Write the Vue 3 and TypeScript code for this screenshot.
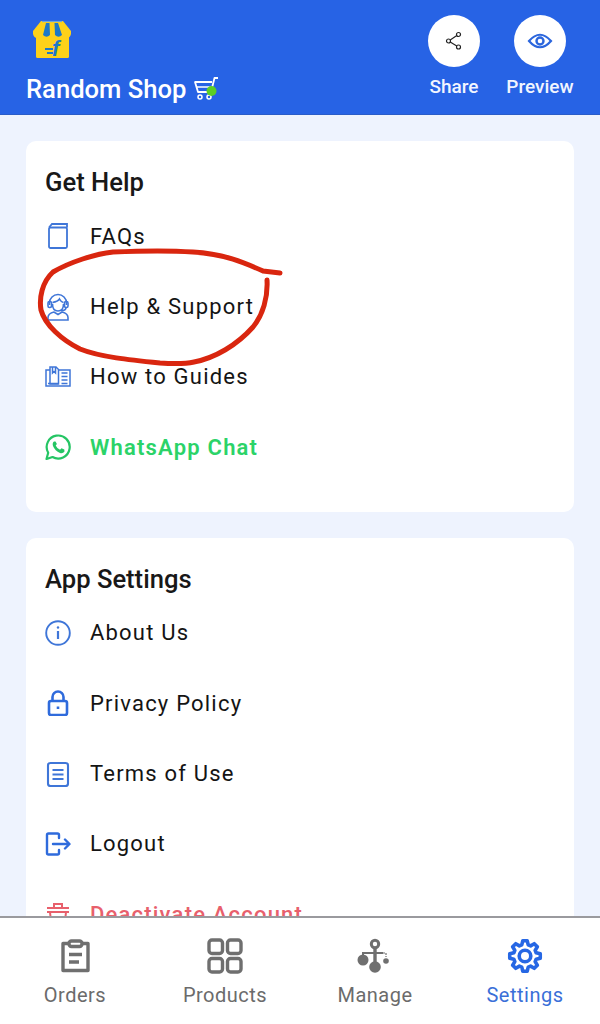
<template>
  <div class="screen">
    <header class="top-bar">
      <div class="shop">
        <svg class="shop-logo" width="40" height="40" viewBox="0 0 40 40">
          <rect x="4" y="13" width="33" height="25" rx="1.500" fill="#fdd11a" />
          <path d="M9 1h22l8 10v3q-1 4-4 4H5q-3 0-4-4v-3z" fill="#fdd11a" />
          <path d="M14 3h3.500L18 15q-3.500 3.500-7 0z" fill="#1c78c8" />
          <path d="M22.500 3H26l4 12q-3.500 3.500-7 0z" fill="#1c78c8" />
          <path d="M10 1.500h20" stroke="#6fa8d8" stroke-width="1.200" />
          <text x="20" y="36" class="logo-f">f</text>
          <path d="M13 29h8M15 33h6" stroke="#1c78c8" stroke-width="1.800" />
        </svg>
        <div class="shop-name">
          <span>Random Shop</span>
          <svg width="26" height="26" viewBox="0 0 26 26">
            <path d="M25 2h-3.500L18 16H5L2 6h17" fill="none" stroke="#fff" stroke-width="1.800" stroke-linejoin="round" />
            <path d="M4 11h14" stroke="#fff" stroke-width="1.500" />
            <circle cx="7" cy="21" r="2" fill="none" stroke="#fff" stroke-width="1.500" />
            <circle cx="16" cy="21" r="2" fill="none" stroke="#fff" stroke-width="1.500" />
            <circle cx="18.500" cy="15" r="5" fill="#5ccf24" />
          </svg>
        </div>
      </div>
      <div class="top-actions">
        <div class="top-action">
          <span class="round-btn">
            <svg width="20" height="20" viewBox="0 0 20 20" fill="none" stroke="#222" stroke-width="1.200">
              <circle cx="14.500" cy="3.500" r="2" />
              <circle cx="4.500" cy="10" r="2" />
              <circle cx="14.500" cy="16" r="2" />
              <path d="M6.200 8.900 12.800 4.600M6.200 11.100l6.600 3.800" />
            </svg>
          </span>
          <span class="top-label">Share</span>
        </div>
        <div class="top-action">
          <span class="round-btn">
            <svg width="26" height="20" viewBox="0 0 26 20" fill="none" stroke="#2b66dd" stroke-width="2.200">
              <path d="M2 10q11-12.500 22 0q-11 12.500-22 0z" />
              <circle cx="13" cy="10" r="3.500" stroke-width="2.400" />
            </svg>
          </span>
          <span class="top-label">Preview</span>
        </div>
      </div>
    </header>

    <main class="content">
      <section class="card help-card">
        <h2>Get Help</h2>
        <div class="row">
          <svg class="row-icon" width="26" height="28" viewBox="0 0 26 28" fill="none" stroke="#3f76d8" stroke-width="1.800">
            <path d="M4 5.500 7 2h15v3.500" />
            <rect x="4" y="5.500" width="18" height="20.500" rx="1.500" />
          </svg>
          <span>FAQs</span>
        </div>
        <div class="row">
          <svg class="row-icon" width="26" height="28" viewBox="0 0 26 28" fill="none" stroke="#3f76d8" stroke-width="1.600">
            <path d="M4.500 12V10a8.500 8.500 0 0 1 17 0v2" />
            <rect x="3" y="8.500" width="3.500" height="6" rx="1.500" />
            <rect x="19.500" y="8.500" width="3.500" height="6" rx="1.500" />
            <path d="M7.500 9.500q5.500-1 7-3.500 1.500 3 4 3.500" />
            <path d="M7.500 11q0 7 5.500 7t5.500-7" />
            <path d="M21 14.500q0 3-5 3.200" />
            <path d="M3 27v-2.500q0-4 6-5.500l4 2.500 4-2.500q6 1.500 6 5.500V27z" />
          </svg>
          <span>Help &amp; Support</span>
        </div>
        <div class="row">
          <svg class="row-icon" width="26" height="24" viewBox="0 0 26 24" fill="none" stroke="#3f76d8" stroke-width="1.500">
            <path d="M5 5H1v16h24V5H14" />
            <path d="M5 2h6l2.500 2.500V19H5z" />
            <path d="M7.500 2v6l1.500-1.500L10.500 8V2" />
            <path d="M16.500 8h6M16.500 11.500h6M16.500 15h6M3 18.500h10M16.500 18.500h6" />
          </svg>
          <span>How to Guides</span>
        </div>
        <div class="row whatsapp">
          <svg class="row-icon" width="26" height="26" viewBox="0 0 26 26" fill="none">
            <path d="M1.500 25l1.700-6.300A11.500 11.500 0 1 1 7.500 23z" stroke="#25c564" stroke-width="2.200" stroke-linejoin="round" />
            <path d="M9 7.500q-2 1.500-1 4.500 2 5 7 7 3 .8 4.500-1.500l-.2-2-2.800-1.300-1.500 1.500q-3-1.200-4.300-4.200l1.200-1.500L10.500 7.500z" fill="#25c564" />
          </svg>
          <span>WhatsApp Chat</span>
        </div>
      </section>

      <section class="card">
        <h2>App Settings</h2>
        <div class="row">
          <svg class="row-icon" width="26" height="26" viewBox="0 0 26 26" fill="none" stroke="#3f76d8" stroke-width="1.900">
            <circle cx="13" cy="13" r="11.800" />
            <path d="M13 11v8" stroke-width="2.200" />
            <circle cx="13" cy="7.500" r="1.200" fill="#3f76d8" stroke="none" />
          </svg>
          <span>About Us</span>
        </div>
        <div class="row">
          <svg class="row-icon" width="26" height="26" viewBox="0 0 26 26" fill="none" stroke="#2f6bdc" stroke-width="2.600">
            <rect x="4" y="11" width="18" height="14" rx="2" />
            <path d="M7.500 11V7a5.500 5.500 0 0 1 11 0v4" />
            <path d="M13 16.500v2.500" />
          </svg>
          <span>Privacy Policy</span>
        </div>
        <div class="row">
          <svg class="row-icon" width="26" height="26" viewBox="0 0 26 26" fill="none" stroke="#3f76d8" stroke-width="2.100">
            <rect x="3" y="2" width="20" height="23" rx="2.500" />
            <path d="M7.500 9h11M7.500 13.500h11M7.500 18h11" />
          </svg>
          <span>Terms of Use</span>
        </div>
        <div class="row">
          <svg class="row-icon" width="26" height="26" viewBox="0 0 26 26" fill="none" stroke="#2f6bdc" stroke-width="2.400" stroke-linecap="round" stroke-linejoin="round">
            <path d="M14 7V4q0-1.500-1.500-1.500h-9Q2 2.500 2 4v18q0 1.500 1.500 1.500h9q1.500 0 1.500-1.500v-3" />
            <path d="M8 13h16M20 8.500l4.500 4.500-4.500 4.500" />
          </svg>
          <span>Logout</span>
        </div>
        <div class="row danger">
          <svg class="row-icon" width="26" height="26" viewBox="0 0 26 26" fill="none" stroke="#e8606c" stroke-width="2">
            <path d="M2 7h22M9 7V3h8v4M2 11h22M5 11l1.500 14h13L21 11" />
          </svg>
          <span>Deactivate Account</span>
        </div>
      </section>

      <svg class="scribble" width="600" height="400" viewBox="0 0 600 400" fill="none">
        <path
          d="M280 273 263 271C245 263 225 254 193 252C165 250 135 251 113 252C95 254 70 262 53 272C42 282 39 298 41 310C45 325 62 340 80 349C100 357 130 360 160 363C175 364 185 364 194 362C215 358 237 345 253 327C263 315 268 297 267 280"
          stroke="#d9260f"
          stroke-width="5"
          stroke-linecap="round"
          stroke-linejoin="round"
        />
      </svg>
    </main>

    <nav class="bottom-nav">
      <div class="nav-item">
        <svg width="36" height="36" viewBox="0 0 36 36" fill="none" stroke="#6f6f6f" stroke-width="3.400" stroke-linejoin="round">
          <path d="M12 5.500H6v27h25v-27h-6" />
          <rect x="12" y="3" width="13" height="5.500" rx="2.500" />
          <path d="M12 16.500h13M12 24h10" />
        </svg>
        <span>Orders</span>
      </div>
      <div class="nav-item">
        <svg width="36" height="36" viewBox="0 0 36 36" fill="none" stroke="#6f6f6f" stroke-width="3.400">
          <rect x="2" y="2" width="13.500" height="13.500" rx="3" />
          <rect x="20.500" y="2" width="13.500" height="13.500" rx="3" />
          <rect x="2" y="20.500" width="13.500" height="13.500" rx="3" />
          <rect x="20.500" y="20.500" width="13.500" height="13.500" rx="3" />
        </svg>
        <span>Products</span>
      </div>
      <div class="nav-item">
        <svg width="36" height="36" viewBox="0 0 36 36" fill="none" stroke="#6f6f6f">
          <circle cx="18" cy="6" r="3.700" stroke-width="3" />
          <path d="M18 10v16" stroke-width="3.400" />
          <path d="M6 22v-7h20" stroke-width="2" />
          <path d="M26 15h3v4" stroke-width="1.200" stroke-dasharray="2 1" />
          <circle cx="6" cy="22" r="5.500" fill="#6f6f6f" stroke="none" />
          <circle cx="18" cy="29" r="5.800" fill="#6f6f6f" stroke="none" />
          <circle cx="29" cy="23" r="2.800" fill="#6f6f6f" stroke="none" />
        </svg>
        <span>Manage</span>
      </div>
      <div class="nav-item active">
        <svg width="36" height="36" viewBox="0 0 36 36" fill="none" stroke="#2667e4" stroke-width="3.600" stroke-linejoin="round">
          <path :d="gearPath" />
          <circle cx="18" cy="18" r="5.800" />
        </svg>
        <span>Settings</span>
      </div>
    </nav>
  </div>
</template>

<script setup lang="ts">
// gear outline for the active tab, 8 teeth
const gearPath = (() => {
  const pts: string[] = []
  const teeth = 8
  for (let i = 0; i < teeth; i++) {
    const a = (i / teeth) * Math.PI * 2 - Math.PI / 2
    const step = (Math.PI * 2) / teeth
    const corners: [number, number][] = [
      [11.6, a - step * 0.36],
      [15.4, a - step * 0.18],
      [15.4, a + step * 0.18],
      [11.6, a + step * 0.36],
    ]
    for (const [r, t] of corners) {
      const x = 18 + r * Math.cos(t)
      const y = 18 + r * Math.sin(t)
      pts.push(`${x.toFixed(2)} ${y.toFixed(2)}`)
    }
  }
  return `M${pts.join('L')}Z`
})()
</script>

<style scoped>
.screen {
  position: relative;
  width: 600px;
  height: 1024px;
  overflow: hidden;
  display: flex;
  flex-direction: column;
  background: #eef3fe;
  font-family: Roboto, "Liberation Sans", sans-serif;
}

.top-bar {
  flex: none;
  height: 115px;
  box-sizing: border-box;
  padding: 15px 26px 0;
  display: flex;
  justify-content: space-between;
  background: #2763e5;
  border-bottom: 1px solid #2a5cc8;
}

.shop-logo {
  display: block;
  margin: 5px 0 0 6px;
}

.logo-f {
  font: italic 700 22px "Liberation Sans", sans-serif;
  fill: #1c78c8;
}

.shop-name {
  margin-top: 12px;
  display: flex;
  align-items: center;
  gap: 7px;
  font-size: 25.6px;
  line-height: 34px;
  font-weight: 500;
  color: #fff;
}

.top-actions {
  display: flex;
}

.top-action {
  width: 86px;
  display: flex;
  flex-direction: column;
  align-items: center;
}

.top-action:last-child {
  margin-right: -9px;
}

.round-btn {
  width: 52px;
  height: 52px;
  border-radius: 50%;
  background: #fff;
  display: flex;
  align-items: center;
  justify-content: center;
}

.top-label {
  margin-top: 7px;
  font-size: 19px;
  line-height: 26px;
  font-weight: 500;
  color: #f1f5ff;
}

.content {
  position: relative;
  flex: 1;
  min-height: 0;
  padding: 26px 26px 0;
  display: flex;
  flex-direction: column;
  gap: 26px;
}

.card {
  flex: none;
  padding: 26px 19px 0;
  border-radius: 10px;
  background: #fff;
}

.help-card {
  padding-bottom: 29px;
}

.card h2 {
  margin: 0 0 4px;
  font-size: 25.6px;
  line-height: 30px;
  font-weight: 500;
  color: #181818;
}

.row {
  height: 70.4px;
  display: flex;
  align-items: center;
  font-size: 22px;
  letter-spacing: 1.2px;
  color: #141414;
}

.row-icon {
  flex: none;
  margin-right: 19px;
}

.whatsapp {
  font-weight: 600;
  color: #2bd368;
}

.danger {
  font-weight: 500;
  color: #e8606c;
}

.scribble {
  position: absolute;
  top: -115px;
  left: 0;
  pointer-events: none;
}

.bottom-nav {
  position: absolute;
  left: 0;
  right: 0;
  bottom: 0;
  height: 108px;
  box-sizing: border-box;
  padding-top: 20px;
  display: grid;
  grid-template-columns: repeat(4, 150px);
  background: #fff;
  border-top: 2px solid #9a9a9e;
}

.nav-item {
  display: flex;
  flex-direction: column;
  align-items: center;
  gap: 8px;
  font-size: 20px;
  line-height: 26px;
  letter-spacing: 0.5px;
  color: #6b6b6b;
}

.nav-item.active {
  color: #3a6fd8;
}
</style>

<style>
html,
body {
  margin: 0;
  background: #eef3fe;
}
</style>
